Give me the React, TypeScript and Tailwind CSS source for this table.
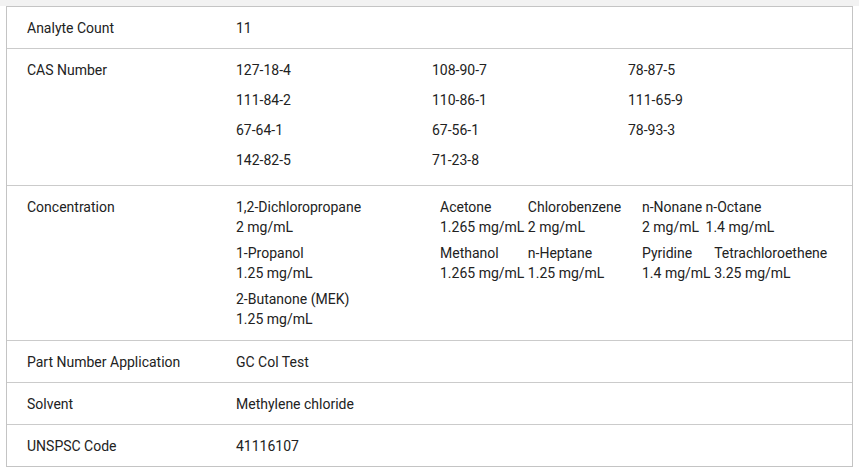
import React from 'react';

const casNumbers = [
  '127-18-4', '108-90-7', '78-87-5',
  '111-84-2', '110-86-1', '111-65-9',
  '67-64-1', '67-56-1', '78-93-3',
  '142-82-5', '71-23-8',
];

type Analyte = { name: string; conc: string };

// concentration cell is three columns; the 2nd and 3rd hold pairs laid inline
const concCol1: Analyte[] = [
  { name: '1,2-Dichloropropane', conc: '2 mg/mL' },
  { name: '1-Propanol', conc: '1.25 mg/mL' },
  { name: '2-Butanone (MEK)', conc: '1.25 mg/mL' },
];

const concCol2: Analyte[][] = [
  [{ name: 'Acetone', conc: '1.265 mg/mL' }, { name: 'Chlorobenzene', conc: '2 mg/mL' }],
  [{ name: 'Methanol', conc: '1.265 mg/mL' }, { name: 'n-Heptane', conc: '1.25 mg/mL' }],
];

const concCol3: Analyte[][] = [
  [{ name: 'n-Nonane', conc: '2 mg/mL' }, { name: 'n-Octane', conc: '1.4 mg/mL' }],
  [{ name: 'Pyridine', conc: '1.4 mg/mL' }, { name: 'Tetrachloroethene', conc: '3.25 mg/mL' }],
];

const Item = ({ a }: { a: Analyte }) => (
  <div className="inline-block align-top">
    <div>{a.name}</div>
    <div>{a.conc}</div>
  </div>
);

const Row = ({ label, children, last = false, pb = 'pb-[10px]' }: { label: string; children: React.ReactNode; last?: boolean; pb?: string }) => (
  <div className={`grid grid-cols-[229px_1fr] ${last ? '' : 'border-b border-[#cbcbcb]'}`}>
    <div className={`pl-[20px] pt-[11px] ${pb}`}>{label}</div>
    <div className={`pt-[11px] ${pb}`}>{children}</div>
  </div>
);

const App = () => {
  return (
    <div className="min-h-screen bg-white font-['Roboto',sans-serif] text-[14px] leading-[20px] text-[#222]">
      <div className="h-[6px] bg-[#f2f2f2]" />
      <div className="ml-[6px] w-[847px] border border-[#c4c4c4]">
        <Row label="Analyte Count">11</Row>

        <Row label="CAS Number" pb="pb-[15px]">
          <div className="grid grid-cols-[196px_196px_1fr] gap-y-[10px]">
            {casNumbers.map((c) => (
              <div key={c}>{c}</div>
            ))}
          </div>
        </Row>

        <Row label="Concentration" pb="pb-[11px]">
          <div className="grid grid-cols-[204px_202px_1fr]">
            <div className="flex flex-col gap-[6px]">
              {concCol1.map((a) => (
                <Item key={a.name} a={a} />
              ))}
            </div>
            <div className="flex flex-col gap-[6px]">
              {concCol2.map((pair, i) => (
                <div key={i}>
                  <Item a={pair[0]} /> <Item a={pair[1]} />
                </div>
              ))}
            </div>
            <div className="flex flex-col gap-[6px]">
              {concCol3.map((pair, i) => (
                <div key={i}>
                  <Item a={pair[0]} /> <Item a={pair[1]} />
                </div>
              ))}
            </div>
          </div>
        </Row>

        <Row label="Part Number Application">GC Col Test</Row>
        <Row label="Solvent">Methylene chloride</Row>
        <Row label="UNSPSC Code" last>41116107</Row>
      </div>
    </div>
  );
};

export default App;
